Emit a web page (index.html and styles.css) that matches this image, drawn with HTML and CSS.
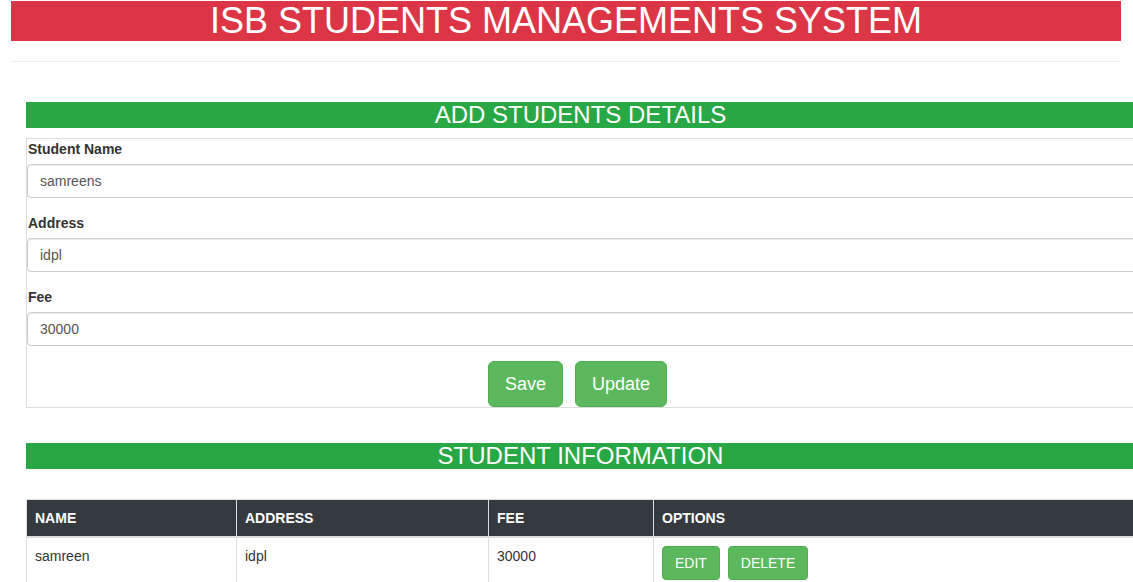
FILE: index.html
```html
<!DOCTYPE html>
<html>
<head>
<meta charset="utf-8">
<link rel="stylesheet" href="styles.css">
</head>
<body>
<h1 class="banner">ISB STUDENTS MANAGEMENTS SYSTEM</h1>
<hr class="divider">
<div class="content">
  <h3 class="section-title">ADD STUDENTS DETAILS</h3>
  <form class="form-box">
    <div class="form-group">
      <label class="field-label">Student Name</label>
      <input class="field-input" type="text" value="samreens">
    </div>
    <div class="form-group">
      <label class="field-label">Address</label>
      <input class="field-input" type="text" value="idpl">
    </div>
    <div class="form-group">
      <label class="field-label">Fee</label>
      <input class="field-input" type="text" value="30000">
    </div>
    <div class="actions">
      <button type="button" class="btn btn-lg">Save</button>
      <button type="button" class="btn btn-lg">Update</button>
    </div>
  </form>

  <h3 class="section-title section-title-2">STUDENT INFORMATION</h3>
  <table class="data-table">
    <thead>
      <tr>
        <th class="col-name">NAME</th>
        <th class="col-address">ADDRESS</th>
        <th class="col-fee">FEE</th>
        <th>OPTIONS</th>
      </tr>
    </thead>
    <tbody>
      <tr>
        <td>samreen</td>
        <td>idpl</td>
        <td>30000</td>
        <td><button type="button" class="btn btn-sm">EDIT</button> <button type="button" class="btn btn-sm">DELETE</button></td>
      </tr>
    </tbody>
  </table>
</div>
</body>
</html>
```

FILE: styles.css
```css
html {
  overflow: hidden;
}
body {
  margin: 0;
  font-family: "Liberation Sans", Arial, sans-serif;
  font-size: 14px;
  line-height: 1.42857;
  color: #333;
  background: #fff;
}
.banner {
  margin: 1px 12px 0 11px;
  height: 40px;
  background: #dc3545;
  color: #fff;
  font-size: 36px;
  font-weight: 400;
  line-height: 40px;
  text-align: center;
}
.divider {
  margin: 20px 12px 0 11px;
  border: 0;
  border-top: 1px solid #eee;
  height: 0;
}
.content {
  margin-left: 26px;
  padding-top: 20px;
  width: 1115px;
}
.section-title {
  margin: 20px 0 10px;
  padding-right: 6px;
  height: 26px;
  background: #28a745;
  color: #fff;
  font-size: 24px;
  font-weight: 400;
  line-height: 25px;
  text-align: center;
}
.section-title-2 {
  margin-top: 35px;
  margin-bottom: 30px;
}
.form-box {
  border: 1px solid #ddd;
  margin: 0;
}
.form-group {
  margin-bottom: 15px;
}
.field-label {
  display: block;
  margin: 1px 0 5px 1px;
  font-weight: 700;
  line-height: 20px;
  color: #333;
}
.form-group:first-child .field-label {
  margin-top: 0;
}
.field-input {
  display: block;
  box-sizing: border-box;
  width: 100%;
  height: 34px;
  padding: 6px 12px;
  font-family: "Liberation Sans", Arial, sans-serif;
  font-size: 14px;
  color: #555;
  border: 1px solid #ccc;
  border-radius: 4px;
  box-shadow: inset 0 1px 1px rgba(0, 0, 0, .075);
  background: #fff;
}
.actions {
  display: flex;
  justify-content: center;
  gap: 12px;
  padding-right: 12px;
}
.btn {
  font-family: "Liberation Sans", Arial, sans-serif;
  color: #fff;
  background: #5cb85c;
  border: 1px solid #4cae4c;
  cursor: pointer;
}
.btn-lg {
  height: 46px;
  padding: 10px 16px;
  font-size: 18px;
  line-height: 24px;
  border-radius: 6px;
}
.btn-sm {
  height: 34px;
  padding: 6px 12px;
  font-size: 14px;
  line-height: 20px;
  border-radius: 4px;
  margin-right: 4px;
}
.data-table {
  width: 1115px;
  border-collapse: collapse;
  border: 1px solid #ddd;
}
.data-table th,
.data-table td {
  border: 1px solid #ddd;
  padding: 8px;
  text-align: left;
  vertical-align: top;
  line-height: 20px;
}
.data-table th {
  background: #343a40;
  color: #fff;
  font-weight: 700;
  border-bottom: 2px solid #ddd;
}
.col-name {
  width: 193px;
}
.col-address {
  width: 235px;
}
.col-fee {
  width: 148px;
}
```
